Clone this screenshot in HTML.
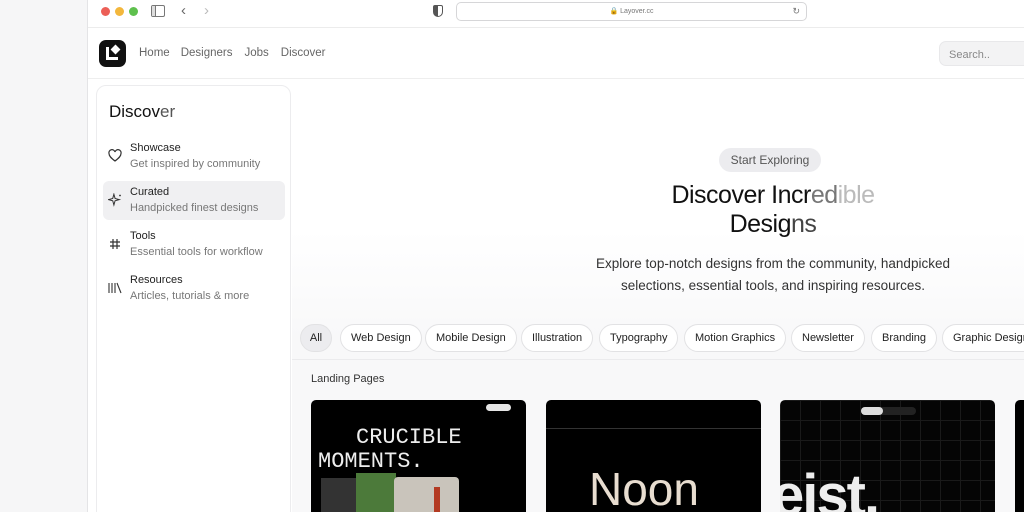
<!DOCTYPE html>
<html style="width:1024px;height:512px;overflow:hidden"><head><style>
*{margin:0;padding:0;box-sizing:border-box}
body{width:1024px;height:512px;overflow:hidden;background:#f6f6f7;font-family:"Liberation Sans",sans-serif;position:relative}
.abs{position:absolute}
.win{left:87px;top:0;width:937px;height:512px;background:#fff;border-left:1px solid #e4e4e6}
.tb{left:88px;top:0;width:936px;height:28px;background:#fff;border-bottom:1px solid #ececec}
.dot{width:9px;height:9px;border-radius:50%;top:7px}
.nav{left:88px;top:29px;width:936px;height:50px;background:#fff;border-bottom:1px solid #eee}
.main{left:292px;top:80px;width:732px;height:432px;background:linear-gradient(#fff 0,#fff 150px,#f8f8f9 260px,#f8f8f9)}
.side{left:96px;top:85px;width:195px;height:440px;background:#fff;border:1px solid #ececee;border-radius:10px}
.item{position:absolute;left:6px;width:182px;height:39px;border-radius:6px}
.item .t{position:absolute;left:27px;top:5px;font-size:11px;color:#222}
.item .s{position:absolute;left:27px;top:21px;font-size:11px;color:#777}
.chip{position:absolute;top:324px;height:28px;border:1px solid #e2e2e4;border-radius:14px;background:#fff;font-size:11px;color:#222;line-height:26px;padding:0 10px;white-space:nowrap}
.card{position:absolute;top:400px;width:215px;height:112px;background:#000;border-radius:5px 5px 0 0;overflow:hidden}
</style></head><body>
<div class="abs win"></div>
<div class="abs tb"></div>
<div class="abs dot" style="left:101px;background:#ec5f57"></div>
<div class="abs dot" style="left:115px;background:#f3b73c"></div>
<div class="abs dot" style="left:129px;background:#5ec04d"></div>
<div class="abs" style="left:151px;top:5px;width:14px;height:12px;border:1.3px solid #777;border-radius:2px"><div style="width:4px;height:100%;border-right:1.3px solid #777;background:#ddd"></div></div>
<div class="abs" style="left:181px;top:2px;font-size:15px;color:#666">‹</div>
<div class="abs" style="left:204px;top:2px;font-size:15px;color:#bbb">›</div>
<div class="abs" style="left:433px;top:5px;width:10px;height:12px;border:1.3px solid #555;border-radius:2px 2px 5px 5px;background:linear-gradient(90deg,#555 50%,#fff 50%)"></div>
<div class="abs" style="left:456px;top:2px;width:351px;height:19px;border:1px solid #d6d6d8;border-radius:5px;background:#fff;font-size:7px;color:#777;text-align:center;line-height:17px">🔒 Layover.cc<span style="position:absolute;right:6px;font-size:9px">↻</span></div>
<div class="abs nav"></div>
<div class="abs" style="left:99px;top:40px;width:27px;height:27px;background:#111;border-radius:7px"><div style="position:absolute;left:7px;top:7px;width:3px;height:13px;background:#fff"></div><div style="position:absolute;left:7px;top:17px;width:12px;height:3px;background:#fff"></div><div style="position:absolute;left:13px;top:6px;width:7px;height:7px;background:#fff;transform:rotate(45deg)"></div></div>
<div class="abs" style="left:139px;top:47px;font-size:11.5px;color:#666"><span>Home</span><span style="margin-left:11px">Designers</span><span style="margin-left:12px">Jobs</span><span style="margin-left:12px">Discover</span></div>
<div class="abs" style="left:939px;top:41px;width:100px;height:25px;background:#f3f3f4;border:1px solid #e8e8ea;border-radius:7px;font-size:11px;color:#888;padding:7px 9px">Search..</div>
<div class="abs main"></div>
<div class="abs side">
<div style="position:absolute;left:12px;top:16px;font-size:17px;color:#111">Discov<span style="color:#555">er</span></div>
<div class="item" style="top:51px"><svg style="position:absolute;left:5px;top:12px" width="14" height="13" viewBox="0 0 14 13"><path d="M7 12C3 9 1 7 1 4.5A3 3 0 0 1 7 3a3 3 0 0 1 6 1.5C13 7 11 9 7 12z" fill="none" stroke="#333" stroke-width="1.2"/></svg><div class="t">Showcase</div><div class="s">Get inspired by community</div></div>
<div class="item" style="top:95px;background:#f0f0f2"><svg style="position:absolute;left:5px;top:12px" width="15" height="15" viewBox="0 0 15 15"><path d="M6 3L7.3 7.7 12 9 7.3 10.3 6 15 4.7 10.3 0 9 4.7 7.7z" transform="translate(0.5,-1.5) scale(0.9)" fill="none" stroke="#333" stroke-width="1.1"/><circle cx="12" cy="2.5" r="0.9" fill="#333"/></svg><div class="t">Curated</div><div class="s">Handpicked finest designs</div></div>
<div class="item" style="top:139px"><svg style="position:absolute;left:6px;top:13px" width="12" height="12" viewBox="0 0 12 12"><path d="M4 1v10M8 1v10M1 4h10M1 8h10" stroke="#333" stroke-width="1.2"/></svg><div class="t">Tools</div><div class="s">Essential tools for workflow</div></div>
<div class="item" style="top:183px"><svg style="position:absolute;left:5px;top:13px" width="14" height="12" viewBox="0 0 14 12"><path d="M1 1v10M4 1v10M7 1v10M9 1l4 10" stroke="#333" stroke-width="1.1"/></svg><div class="t">Resources</div><div class="s">Articles, tutorials &amp; more</div></div>
</div>
<div class="abs" style="left:719px;top:148px;width:102px;height:24px;border-radius:12px;background:#ececef;font-size:12px;color:#555;text-align:center;line-height:24px">Start Exploring</div>
<div class="abs" style="left:560px;top:181px;width:426px;text-align:center;font-size:25px;line-height:29px;color:#111;letter-spacing:-0.5px">Discover Incr<span style="color:#777">ed</span><span style="color:#bbb">ible</span><br>Desig<span style="color:#444">ns</span></div>
<div class="abs" style="left:576px;top:253px;width:394px;text-align:center;font-size:13.5px;line-height:22px;color:#333">Explore top-notch designs from the community, handpicked selections, essential tools, and inspiring resources.</div>
<div class="abs" style="left:292px;top:359px;width:732px;height:1px;background:#ebebed"></div>
<div class="chip" style="left:300px;background:#ececef;width:32px;padding:0;text-align:center">All</div>
<div class="chip" style="left:340px">Web Design</div>
<div class="chip" style="left:425px">Mobile Design</div>
<div class="chip" style="left:521px">Illustration</div>
<div class="chip" style="left:599px">Typography</div>
<div class="chip" style="left:684px">Motion Graphics</div>
<div class="chip" style="left:791px">Newsletter</div>
<div class="chip" style="left:871px">Branding</div>
<div class="chip" style="left:942px">Graphic Design</div>
<div class="abs" style="left:311px;top:373px;font-size:11px;color:#333">Landing Pages</div>
<div class="card" style="left:311px"><div style="position:absolute;left:45px;top:26px;font:22px 'Liberation Mono',monospace;color:#eee;line-height:24px">CRUCIBLE</div><div style="position:absolute;left:7px;top:50px;font:22px 'Liberation Mono',monospace;color:#eee;line-height:24px">MOMENTS.</div><div style="position:absolute;left:10px;top:78px;width:35px;height:50px;background:#333"></div><div style="position:absolute;left:45px;top:73px;width:40px;height:50px;background:#4c7a3a"></div><div style="position:absolute;left:83px;top:77px;width:65px;height:50px;background:#c9c4bb;border-radius:4px"><div style="position:absolute;left:40px;top:10px;width:6px;height:40px;background:#b33a22"></div></div><div style="position:absolute;left:175px;top:4px;width:25px;height:7px;background:#fff;border-radius:4px;opacity:.9"></div></div>
<div class="card" style="left:546px"><div style="position:absolute;left:0;top:28px;width:215px;height:1px;background:#333"></div><div style="position:absolute;left:43px;top:62px;font-size:46px;color:#e8ddd0">Noon</div></div>
<div class="card" style="left:780px;background:#050505;background-image:linear-gradient(#1a1a1a 1px,transparent 1px),linear-gradient(90deg,#1a1a1a 1px,transparent 1px);background-size:20px 20px"><div style="position:absolute;left:81px;top:7px;width:55px;height:8px;background:#222;border-radius:4px"><div style="width:22px;height:8px;background:#ddd;border-radius:4px"></div></div><div style="position:absolute;left:-8px;top:62px;font-size:58px;font-weight:bold;color:#eee;letter-spacing:-2px">eist.</div></div>
<div class="card" style="left:1015px;width:20px"></div>
</body></html>
